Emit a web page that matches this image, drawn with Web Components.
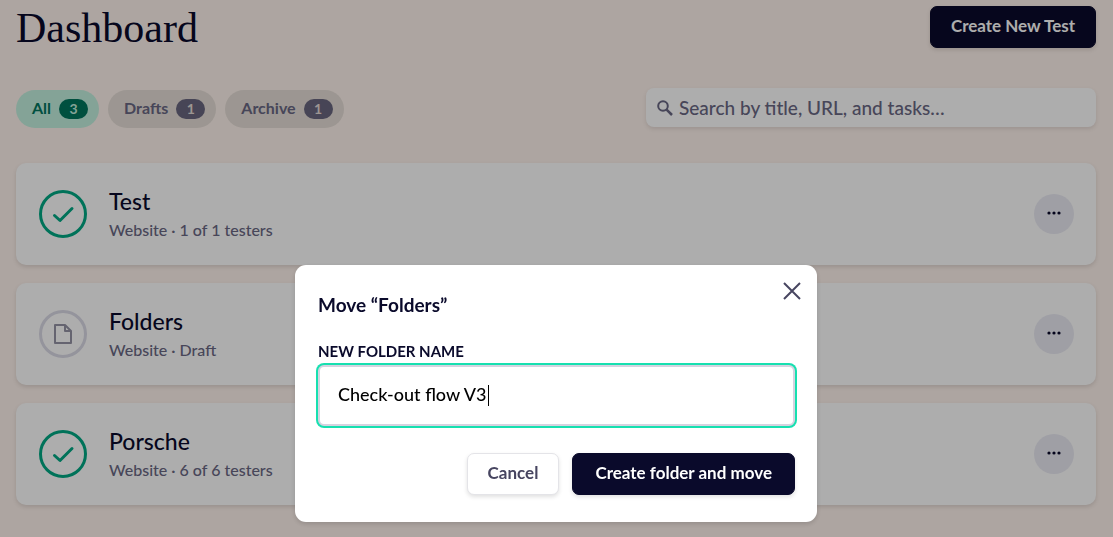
<!DOCTYPE html>
<html lang="en">
<head>
<meta charset="utf-8">
<meta name="viewport" content="width=device-width, initial-scale=1">
<title>Dashboard</title>
<style>
  html { height: 100%; }
  body {
    margin: 0;
    min-height: 100%;
    background: #fff3ed;
    color: var(--ink);
    font-family: Lato, "Open Sans", sans-serif;
    font-size: 16px;
    --ink: #0a0a2b;
    --muted: #696783;
  }
</style>
</head>
<body>
<dashboard-page>
  <filter-chip slot="filters" label="All" count="3" active></filter-chip>
  <filter-chip slot="filters" label="Drafts" count="1"></filter-chip>
  <filter-chip slot="filters" label="Archive" count="1"></filter-chip>
  <test-card status="done">Test<span slot="meta">Website · 1 of 1 testers</span></test-card>
  <test-card status="draft">Folders<span slot="meta">Website · Draft</span></test-card>
  <test-card status="done">Porsche<span slot="meta">Website · 6 of 6 testers</span></test-card>
</dashboard-page>
<move-dialog>Move “Folders”</move-dialog>

<template id="page">
  <style>
    :host { display: block; }
    main { padding: 6px 17px 32px 16px; }
    header { display: flex; justify-content: space-between; align-items: center; }
    h1 { margin: 0; padding-top: 2px; font: 400 42px/40px "Liberation Serif", serif; }
    .bar { display: flex; flex-wrap: wrap; justify-content: space-between; align-items: flex-start; gap: 16px; margin: 40px 0 35px; }
    .filters { display: flex; gap: 9px; padding-top: 2px; }
    .list { display: flex; flex-direction: column; gap: 18px; }
  </style>
  <main>
    <header>
      <h1>Dashboard</h1>
      <app-button>Create New Test</app-button>
    </header>
    <div class="bar">
      <div class="filters"><slot name="filters"></slot></div>
      <search-box></search-box>
    </div>
    <div class="list"><slot></slot></div>
  </main>
</template>

<template id="button">
  <style>
    :host { display: inline-block; }
    button {
      display: block; height: 42px; padding: 0 20px 2px; border: 1px solid var(--ink); border-radius: 7px;
      background: var(--ink); color: #fff; font: 700 17px/24px Lato, sans-serif; white-space: nowrap;
      box-shadow: 0 2px 4px rgba(0, 0, 0, .12);
    }
    :host([wide]) button { padding: 0 22px 2px; }
    :host([plain]) button { background: #fff; color: #474560; border-color: #e4e4e8; }
  </style>
  <button type="button"><slot></slot></button>
</template>

<template id="chip">
  <style>
    :host { display: block; }
    button {
      display: flex; align-items: center; gap: 8px; height: 38px; padding: 0 11px 0 16px; border: 0; border-radius: 19px;
      background: #e6ded7; color: var(--muted); font: 700 16px/20px Lato, sans-serif;
    }
    .label { padding-bottom: 2px; }
    .count { width: 29px; border-radius: 10px; background: #69667f; color: #e6ded7; font-size: 14px; text-align: center; }
    :host([active]) button { background: #c3f0df; color: #00765e; }
    :host([active]) .count { background: #00765e; color: #c3f0df; }
  </style>
  <button type="button"><span class="label"></span><span class="count"></span></button>
</template>

<template id="search">
  <style>
    :host { display: block; flex: 0 1 450px; }
    label {
      display: flex; align-items: center; gap: 6px; height: 39px; padding: 0 11px; box-sizing: border-box;
      border-radius: 8px; background: #fff; box-shadow: 0 2px 4px rgba(0, 0, 0, .1); color: var(--muted);
    }
    svg { flex: none; }
    input { flex: 1; min-width: 0; padding: 0; border: 0; outline: 0; background: none; color: var(--ink); font: 500 19px/24px Lato, sans-serif; }
    input::placeholder { color: var(--muted); opacity: 1; }
  </style>
  <label>
    <svg width="16" height="16" viewBox="0 0 16 16" fill="none" stroke="currentColor" stroke-width="2" aria-hidden="true"><circle cx="6" cy="6" r="4.8"/><path d="M9.6 9.6 15 15" stroke-width="2.5"/></svg>
    <input type="search" placeholder="Search by title, URL, and tasks…" aria-label="Search">
  </label>
</template>

<template id="card">
  <style>
    :host {
      display: flex; align-items: center; gap: 22px; height: 102px; padding: 0 22px 0 23px; box-sizing: border-box;
      border-radius: 10px; background: #fff; box-shadow: 0 2px 4px rgba(0, 0, 0, .12);
    }
    svg { flex: none; display: none; }
    :host([status="done"]) .done, :host([status="draft"]) .draft { display: block; }
    .text { flex: 1; min-width: 0; padding-top: 2px; }
    h2 { margin: 0; font-size: 23px; line-height: 30px; font-weight: 500; }
    p { margin: 0; color: var(--muted); font-size: 16px; line-height: 28px; font-weight: 500; }
    button { display: grid; place-items: center; width: 40px; height: 40px; padding: 0 0 3px; border: 0; border-radius: 50%; background: #ebebf4; color: var(--ink); }
    button svg { display: block; }
  </style>
  <svg class="done" width="48" height="48" viewBox="0 0 48 48" fill="none" stroke="#00a984" stroke-width="3" aria-hidden="true"><circle cx="24" cy="24" r="22.5"/><path d="m15.5 25.5 5.5 5 12-12" stroke-linecap="round" stroke-linejoin="round"/></svg>
  <svg class="draft" width="48" height="48" viewBox="0 0 48 48" fill="none" stroke="#9594a6" stroke-width="2" stroke-linejoin="round" aria-hidden="true"><circle cx="24" cy="24" r="22.5" stroke="#dbdae6" stroke-width="3"/><path d="M16 15h10l6 6v12H16z"/><path d="M26 15v6h6"/></svg>
  <div class="text"><h2><slot></slot></h2><p><slot name="meta"></slot></p></div>
  <button type="button" aria-label="More actions"><svg width="14" height="4" viewBox="0 0 14 4" fill="currentColor"><circle cx="2" cy="2" r="1.6"/><circle cx="7" cy="2" r="1.6"/><circle cx="12" cy="2" r="1.6"/></svg></button>
</template>

<template id="dialog">
  <style>
    :host {
      position: fixed; inset: 0; display: flex; justify-content: center; align-items: flex-end;
      padding: 0 16px 15px 15px; background: rgba(0, 0, 0, .32);
    }
    section {
      position: relative; flex: 0 1 522px; box-sizing: border-box; padding: 26px 22px 27px 23px;
      border-radius: 11px; background: #fff; box-shadow: 0 2px 5px rgba(0, 0, 0, .15);
    }
    h2 { margin: 0 0 20px; font-size: 19px; line-height: 28px; font-weight: 700; }
    label { display: block; margin-bottom: 2px; font-size: 15px; line-height: 24px; font-weight: 700; }
    .field { position: relative; }
    input {
      display: block; width: 100%; height: 61px; box-sizing: border-box; padding: 0 18px 4px; border: 2px solid #d5d3e0; border-radius: 6px;
      outline: 0; box-shadow: 0 0 0 2px #17e0b0; color: #000; background: #fff; font: 500 18px/24px Lato, sans-serif; caret-color: transparent;
    }
    .caret { position: absolute; left: 170px; top: 20px; width: 1px; height: 21px; background: #000; }
    .close { position: absolute; top: 13px; right: 12px; display: grid; place-items: center; width: 26px; height: 26px; padding: 0; border: 0; background: none; color: #474560; }
    .actions { display: flex; flex-wrap: wrap; justify-content: flex-end; gap: 13px; margin-top: 27px; }
  </style>
  <section role="dialog" aria-modal="true" aria-labelledby="heading">
    <button class="close" type="button" aria-label="Close"><svg width="18" height="18" viewBox="0 0 18 18" fill="none" stroke="currentColor" stroke-width="2"><path d="m1 1 16 16M17 1 1 17"/></svg></button>
    <h2 id="heading"><slot></slot></h2>
    <label for="name">NEW FOLDER NAME</label>
    <div class="field"><input id="name" type="text" value="Check-out flow V3"><span class="caret"></span></div>
    <div class="actions"><app-button plain>Cancel</app-button><app-button wide>Create folder and move</app-button></div>
  </section>
</template>

<script>
  class Base extends HTMLElement {
    constructor() {
      super();
      const template = document.getElementById(this.constructor.template);
      this.attachShadow({ mode: 'open' }).append(template.content.cloneNode(true));
    }
  }
  class AppButton extends Base { static template = 'button'; }
  class SearchBox extends Base { static template = 'search'; }
  class TestCard extends Base { static template = 'card'; }
  class DashboardPage extends Base { static template = 'page'; }
  class MoveDialog extends Base { static template = 'dialog'; }
  class FilterChip extends Base {
    static template = 'chip';
    connectedCallback() {
      this.shadowRoot.querySelector('.label').textContent = this.getAttribute('label');
      this.shadowRoot.querySelector('.count').textContent = this.getAttribute('count');
    }
  }
  customElements.define('app-button', AppButton);
  customElements.define('filter-chip', FilterChip);
  customElements.define('search-box', SearchBox);
  customElements.define('test-card', TestCard);
  customElements.define('dashboard-page', DashboardPage);
  customElements.define('move-dialog', MoveDialog);
</script>
</body>
</html>
